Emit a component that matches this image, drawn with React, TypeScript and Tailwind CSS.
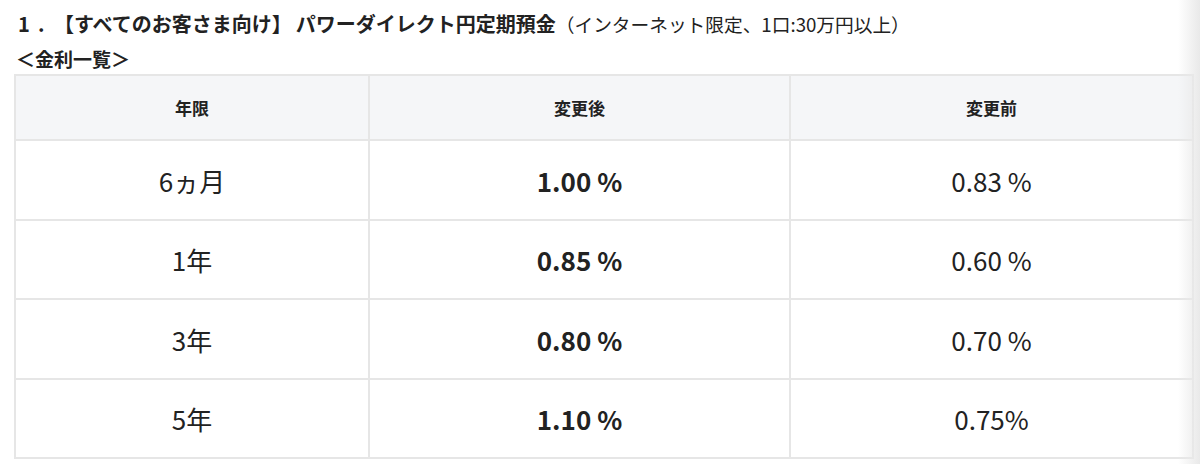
import React from "react";

const rows = [
  { term: "6ヵ月", after: "1.00 %", before: "0.83 %", h: "h-[80px]" },
  { term: "1年", after: "0.85 %", before: "0.60 %", h: "h-[79px]" },
  { term: "3年", after: "0.80 %", before: "0.70 %", h: "h-[80px]" },
  { term: "5年", after: "1.10 %", before: "0.75%", h: "h-[79px]" },
];

export default function App() {
  return (
    <div
      className="relative w-[1200px] h-[464px] overflow-hidden bg-white text-[#222]"
      style={{ fontFamily: '"Noto Sans CJK JP", "Noto Sans", sans-serif' }}
    >
      <div className="pl-[16px] pt-[7px]">
        <p className="leading-[34px] whitespace-nowrap">
          <span className="font-bold text-[20px]">
            <span className="inline-block w-[21px] pl-[2px]">1</span>
            <span className="inline-block w-[17px] pl-[1px]">.</span>
            <span>【すべてのお客さま向け】</span>
            <span className="ml-[4px]">パワーダイレクト円定期預金</span>
          </span>
          <span className="text-[18.7px]">（インターネット限定、1口:30万円以上）</span>
        </p>
        <p className="text-[19px] leading-[34px] font-bold">＜金利一覧＞</p>
      </div>
      <div className="pl-[14px] -mt-[2px]">
        <table className="w-[1178px] border-collapse table-fixed">
          <colgroup>
            <col className="w-[354px]" />
            <col className="w-[421px]" />
            <col className="w-[403px]" />
          </colgroup>
          <thead>
            <tr className="h-[65px] bg-[#f5f6f8]">
              <th className="border-2 border-[#e6e6e6] text-[17px] font-bold">年限</th>
              <th className="border-2 border-[#e6e6e6] text-[17px] font-bold">変更後</th>
              <th className="border-2 border-[#e6e6e6] text-[17px] font-bold">変更前</th>
            </tr>
          </thead>
          <tbody>
            {rows.map((r) => (
              <tr key={r.term} className={r.h}>
                <td className="border-2 border-[#e6e6e6] text-center text-[26px]">{r.term}</td>
                <td className="border-2 border-[#e6e6e6] text-center text-[26px] font-bold">{r.after}</td>
                <td className="border-2 border-[#e6e6e6] text-center text-[26px]">{r.before}</td>
              </tr>
            ))}
          </tbody>
        </table>
      </div>
      <div className="pointer-events-none absolute right-0 top-0 h-full w-[22px] bg-gradient-to-r from-transparent to-[#e9e9e9]" />
    </div>
  );
}
